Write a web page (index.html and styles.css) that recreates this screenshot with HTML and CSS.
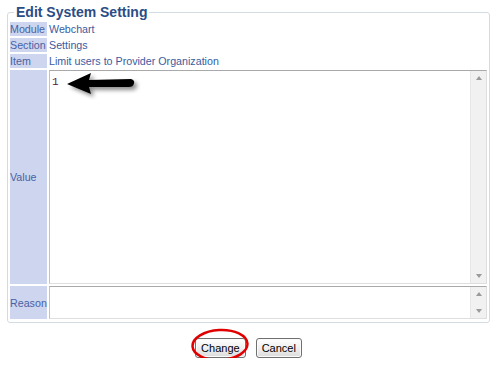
FILE: index.html
```html
<!DOCTYPE html>
<html lang="en">
<head>
    <meta charset="UTF-8">
    <title>Edit System Setting</title>
    <link rel="stylesheet" href="styles.css">
</head>
<body>
    <form class="setting-form">
        <fieldset class="setting">
            <legend>Edit System Setting</legend>
            <table class="grid">
                <tr>
                    <td class="lbl">Module</td>
                    <td class="val">Webchart</td>
                </tr>
                <tr>
                    <td class="lbl">Section</td>
                    <td class="val">Settings</td>
                </tr>
                <tr>
                    <td class="lbl">Item</td>
                    <td class="val">Limit users to Provider Organization</td>
                </tr>
                <tr>
                    <td class="lbl">Value</td>
                    <td class="field">
                        <div class="box box-value">
                            <textarea class="txt">1</textarea>
                            <div class="sbar"><span class="up"></span><span class="down"></span></div>
                            <svg class="pointer" width="90" height="36" viewBox="0 0 90 36">
                                <defs>
                                    <filter id="shade" x="-20%" y="-40%" width="150%" height="190%">
                                        <feGaussianBlur in="SourceAlpha" stdDeviation="2"/>
                                        <feOffset dx="3" dy="3" result="b"/>
                                        <feComponentTransfer><feFuncA type="linear" slope="0.45"/></feComponentTransfer>
                                        <feMerge><feMergeNode/><feMergeNode in="SourceGraphic"/></feMerge>
                                    </filter>
                                </defs>
                                <path d="M2 13 L26 2 L24 9 L66 8 Q70 9 69 12.5 Q68 16 64 16 L24 16 L26 23 Z" fill="#000" filter="url(#shade)"/>
                            </svg>
                        </div>
                    </td>
                </tr>
                <tr>
                    <td class="lbl">Reason</td>
                    <td class="field">
                        <div class="box box-reason">
                            <textarea class="txt"></textarea>
                            <div class="sbar"><span class="up"></span><span class="down"></span></div>
                        </div>
                    </td>
                </tr>
            </table>
        </fieldset>
        <div class="actions">
            <span class="circled">
                <button type="button" class="btn">Change</button>
                <svg class="ring" width="62" height="36" viewBox="0 0 62 36">
                    <ellipse cx="31" cy="18" rx="27.5" ry="15" fill="none" stroke="#e00000" stroke-width="2.5" transform="rotate(-3 31 18)"/>
                </svg>
            </span>
            <button type="button" class="btn">Cancel</button>
        </div>
    </form>
</body>
</html>
```

FILE: styles.css
```css
body {
    margin: 4px 8px 0 7px;
    font-family: "Liberation Sans", Arial, sans-serif;
    font-size: 11px;
    background-color: #fff;
}
.setting {
    margin: 0;
    padding: 0 0 1px 0;
    border: 1px solid #d3dbe3;
    border-radius: 3px;
}
.setting legend {
    margin-left: 6px;
    padding: 0 2px;
    font-size: 14px;
    font-weight: bold;
    line-height: 16px;
    color: #2b4c85;
}
.grid {
    width: 100%;
    border-spacing: 2px;
    margin-top: 0;
}
.grid td {
    padding: 0;
    line-height: 14px;
    font-size: 10.7px;
}
.lbl {
    width: 37px;
    padding: 0 1px;
    background-color: #ced5ef;
    color: #4862a3;
    vertical-align: middle;
    white-space: nowrap;
}
.val {
    color: #3a5c9f;
}
.field {
    vertical-align: top;
}
.box {
    position: relative;
    display: flex;
    border: 1px solid #dedede;
    border-top-color: #a9a9a9;
    border-left-color: #c2c2c2;
    box-sizing: border-box;
}
.box-value {
    height: 214px;
}
.box-reason {
    height: 33px;
}
.txt {
    flex: 1;
    margin: 0;
    padding: 4px 2px;
    border: none;
    resize: none;
    overflow: hidden;
    font-family: "Liberation Mono", "Courier New", monospace;
    font-size: 11px;
    line-height: 14px;
    color: #5c1838;
    outline: none;
}
.sbar {
    width: 15px;
    background-color: #f1f1f1;
    border-left: 1px solid #e6e6e6;
    display: flex;
    flex-direction: column;
    justify-content: space-between;
    align-items: center;
    padding: 5px 0;
}
.sbar span {
    width: 0;
    height: 0;
    border-left: 3.5px solid transparent;
    border-right: 3.5px solid transparent;
}
.sbar .up {
    border-bottom: 4px solid #9a9a9a;
}
.sbar .down {
    border-top: 4px solid #9a9a9a;
}
.pointer {
    position: absolute;
    left: 15px;
    top: 0;
}
.actions {
    display: flex;
    justify-content: center;
    gap: 10px;
    margin-top: 15px;
}
.circled {
    position: relative;
    display: inline-block;
}
.ring {
    position: absolute;
    left: -6px;
    top: -11px;
}
.btn {
    height: 20px;
    padding: 0 5px;
    font-family: "Liberation Sans", Arial, sans-serif;
    font-size: 11px;
    color: #000;
    background: linear-gradient(#ffffff, #ececec 60%, #dcdcdc);
    border: 1px solid #707070;
    border-radius: 3px;
    box-shadow: inset 0 0 0 1px #fafafa;
}
```
